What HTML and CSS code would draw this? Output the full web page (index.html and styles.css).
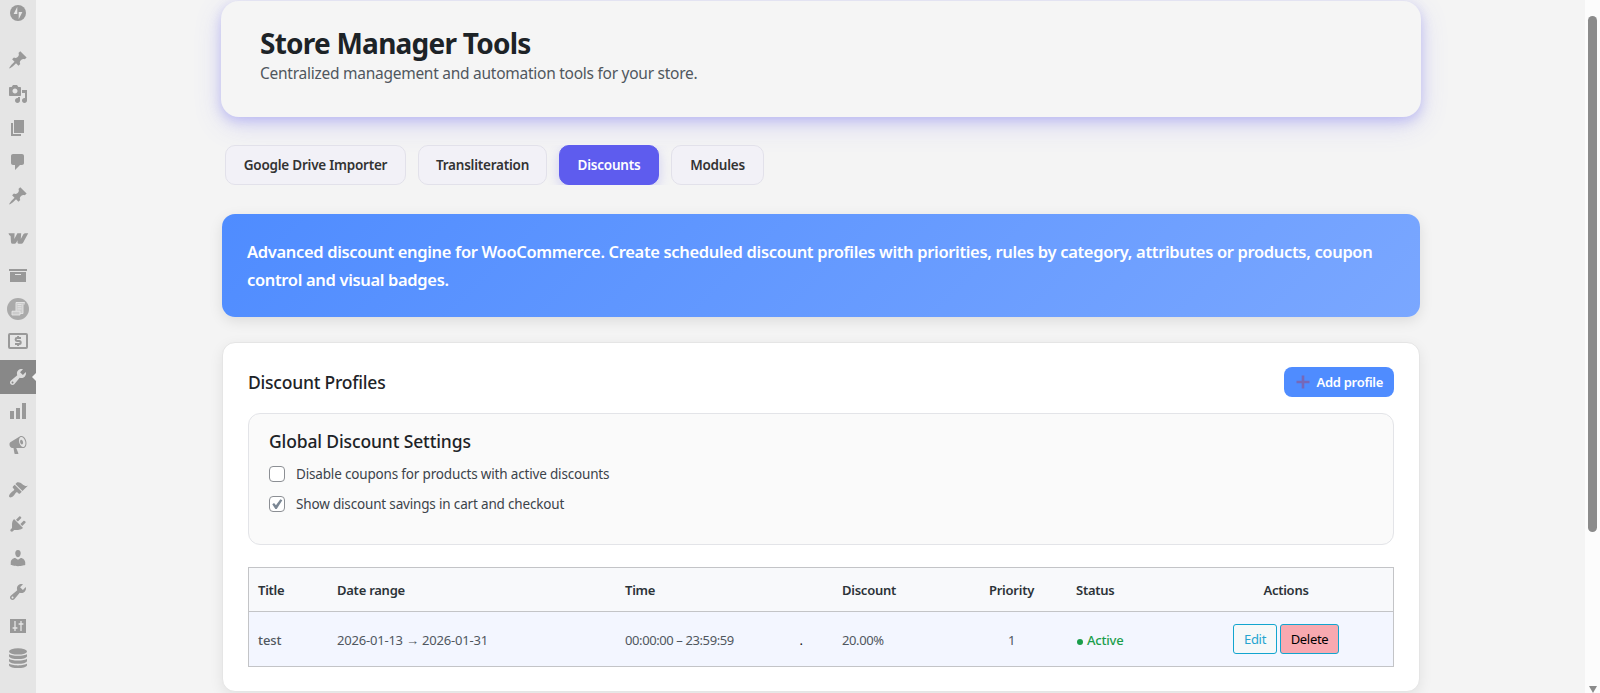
FILE: index.html
```html
<!DOCTYPE html>
<html lang="en">

<head>
    <meta charset="UTF-8">
    <meta name="viewport" content="width=device-width, initial-scale=1.0">
    <title>Store Manager Tools</title>
    <link rel="stylesheet" href="styles.css">
</head>

<body>
    <nav class="menu">
        <a class="menu-item first"><svg viewBox="0 0 20 20"><circle cx="10" cy="10" r="8"/><path class="cut" d="M9.3 3.8v7.1H5.6zM10.7 16.2V9.1h3.7z"/></svg></a>
        <a class="menu-item gap-l"><svg viewBox="0 0 20 20"><path d="M10.44 3.02l1.82-1.82 6.36 6.35-1.83 1.82c-1.05-.68-2.48-.57-3.41.36l-.75.75c-.92.93-1.04 2.35-.35 3.41l-1.83 1.82-2.41-2.41-2.8 2.79c-.42.42-3.38 2.71-3.8 2.29s1.86-3.39 2.28-3.81l2.79-2.79L4.1 9.36l1.83-1.82c1.05.69 2.48.57 3.4-.36l.75-.75c.93-.92 1.05-2.35.36-3.41z"/></svg></a>
        <a class="menu-item"><svg viewBox="0 0 20 20"><path d="M13 11V4c0-.55-.45-1-1-1h-1.67L9 1H5L3.67 3H2c-.55 0-1 .45-1 1v7c0 .55.45 1 1 1h10c.55 0 1-.45 1-1zM7 4.5c1.38 0 2.5 1.12 2.5 2.5S8.38 9.5 7 9.5 4.5 8.38 4.5 7 5.62 4.5 7 4.5zM14 6h5v10.5c0 1.38-1.12 2.5-2.5 2.5S14 17.88 14 16.5s1.12-2.5 2.5-2.5c.17 0 .34.02.5.05V9h-3V6zm-4 8.05V13h2v3.5c0 1.38-1.12 2.5-2.5 2.5S7 17.88 7 16.5 8.12 14 9.5 14c.17 0 .34.02.5.05z"/></svg></a>
        <a class="menu-item"><svg viewBox="0 0 20 20"><path d="M6 15V2h10v13H6zm-1 1h8v2H3V5h2v11z"/></svg></a>
        <a class="menu-item"><svg viewBox="0 0 20 20"><path d="M5 2h9c1.1 0 2 .9 2 2v7c0 1.1-.9 2-2 2h-2l-5 5v-5H5c-1.1 0-2-.9-2-2V4c0-1.1.9-2 2-2z"/></svg></a>
        <a class="menu-item"><svg viewBox="0 0 20 20"><path d="M10.44 3.02l1.82-1.82 6.36 6.35-1.83 1.82c-1.05-.68-2.48-.57-3.41.36l-.75.75c-.92.93-1.04 2.35-.35 3.41l-1.83 1.82-2.41-2.41-2.8 2.79c-.42.42-3.38 2.71-3.8 2.29s1.86-3.39 2.28-3.81l2.79-2.79L4.1 9.36l1.83-1.82c1.05.69 2.48.57 3.4-.36l.75-.75c.93-.92 1.05-2.35.36-3.41z"/></svg></a>
        <a class="menu-item gap-m"><svg viewBox="0 0 20 20"><path d="M.5 5.2H6.6L6.3 11 9.4 5.2H13.2L12.8 11 15.4 6.2Q16 5.2 17.4 5.2H20.2L15.2 14.6Q14.6 15.8 13.2 15.8H11Q9.6 15.8 9.5 14.4V12.2L8.3 14.6Q7.6 15.8 6.4 15.8H4.6Q3.2 15.8 3 14.2L2.6 8Q1 8 .5 5.2z"/></svg></a>
        <a class="menu-item gap-s"><svg viewBox="0 0 20 20"><path d="M19 4v2H1V4h18zM2 7h16v10H2V7zm11 3V9H7v1h6z"/></svg></a>
        <a class="menu-item"><svg viewBox="0 0 20 20"><circle class="disc" cx="10" cy="10" r="11"/><path class="paper" d="M8 3h9v2.4h-2V14H8zM4 12h8v4H4z"/><path class="paper-line" d="M9.5 5.5h4M9.5 7.7h4M9.5 9.9h4M4 12.2h8v3.8H4zM8 12V3.5h8.5M15 5v9.5h-3"/></svg></a>
        <a class="menu-item"><svg viewBox="0 0 20 20"><rect class="frame" x="1" y="1" width="18" height="14" rx="1"/><path class="dollar" d="M13 5H9Q7.6 5 7.6 6.4T9 7.9h2.2q1.5 0 1.5 1.5t-1.5 1.5H7M10.1 3v2M10.1 11v2"/></svg></a>
        <a class="menu-item current"><svg viewBox="0 0 20 20"><path d="M16.68 9.77c-1.34 1.34-3.3 1.67-4.95.99l-5.41 6.52c-.99.99-2.59.99-3.58 0s-.99-2.59 0-3.57l6.52-5.42c-.68-1.65-.35-3.61.99-4.95 1.28-1.28 3.12-1.62 4.72-1.06l-2.89 2.89 2.82 2.82 2.86-2.87c.53 1.58.18 3.39-1.08 4.65zM3.81 16.21c.4.39 1.04.39 1.43 0 .4-.4.4-1.04 0-1.43-.39-.4-1.03-.4-1.43 0-.39.39-.39 1.03 0 1.43z"/></svg></a>
        <a class="menu-item"><svg viewBox="0 0 20 20"><path d="M18 18V2h-4v16h4zm-6 0V7H8v11h4zm-6 0v-8H2v8h4z"/></svg></a>
        <a class="menu-item"><svg viewBox="0 0 20 20"><path d="M18.15 5.94c.46 1.62.38 3.22-.02 4.48-.42 1.28-1.26 2.18-2.3 2.48-.16.06-.26.06-.4.06-.06.02-.12.02-.18.02-.06.02-.14.02-.22.02h-6.8l2.22 5.5c.02.14-.06.26-.14.34-.08.1-.24.16-.34.16H6.95c-.1 0-.26-.06-.34-.16-.08-.08-.16-.2-.14-.34l-1-5.5H4.25l-.02-.02c-.5.06-1.08-.18-1.54-.62s-.88-1.08-1.06-1.88c-.24-.8-.2-1.56-.02-2.2.18-.62.58-1.08 1.06-1.3l.02-.02 9-5.4c.1-.06.18-.1.24-.16.06-.04.14-.08.24-.12.16-.08.28-.12.5-.18 1.04-.3 2.24.1 3.22.98s1.84 2.24 2.26 3.86zm-2.58 5.98h-.02c.4-.1.74-.34 1.04-.7.58-.7.86-1.76.86-3.04 0-.64-.1-1.3-.28-1.98-.34-1.36-1.02-2.5-1.78-3.24s-1.68-1.1-2.46-.88c-.82.22-1.4.96-1.7 2-.32 1.04-.28 2.36.06 3.72.38 1.36 1 2.5 1.8 3.24.78.74 1.62 1.1 2.48.88zm-2.54-7.08c.22-.04.42-.02.62.04.38.16.76.48 1.02 1s.42 1.2.42 1.78c0 .3-.04.56-.12.8-.18.48-.44.84-.86.94-.34.1-.8-.06-1.14-.4s-.64-.86-.78-1.5c-.18-.62-.12-1.24.02-1.72s.48-.84.82-.94z"/></svg></a>
        <a class="menu-item gap-tools"><svg viewBox="0 0 20 20"><path d="M14.48 11.06L7.41 3.99l1.5-1.5c.5-.56 2.3-.47 3.51.32 1.21.8 1.43 1.28 2.91 2.1 1.18.64 2.45 1.26 4.45.85zm-.71.71L6.7 4.7 4.93 6.47c-.39.39-.39 1.02 0 1.41l1.06 1.06c.39.39.39 1.03 0 1.42-.6.6-1.43 1.11-2.21 1.69-.35.26-.7.53-1.01.84C1.43 14.23.4 16.08 1.4 17.07c.99 1 2.84-.03 4.18-1.36.31-.31.58-.66.85-1.02.57-.78 1.08-1.61 1.69-2.21.39-.39 1.02-.39 1.41 0l1.06 1.06c.39.39 1.02.39 1.41 0z"/></svg></a>
        <a class="menu-item"><svg viewBox="0 0 20 20"><path d="M13.11 4.36L9.87 7.6 8 5.73l3.24-3.24c.35-.34 1.05-.2 1.56.32.52.51.66 1.21.31 1.55zm-8 1.77l.91-1.12 9.01 9.01-1.19.84c-.71.71-2.63 1.16-3.82 1.16H6.14L4.9 17.26c-.59.59-1.54.59-2.12 0-.59-.58-.59-1.53 0-2.12l1.24-1.24v-3.88c0-1.13.4-3.19 1.09-3.89zm7.26 3.97l3.24-3.24c.34-.35 1.04-.21 1.55.31.52.51.66 1.21.31 1.55l-3.24 3.25z"/></svg></a>
        <a class="menu-item"><svg viewBox="0 0 20 20"><path d="M10 9.25c-2.27 0-2.73-3.44-2.73-3.44C7 4.02 7.82 2 9.97 2c2.16 0 2.98 2.02 2.71 3.81 0 0-.41 3.44-2.68 3.44zm0 2.57L12.72 10c2.39 0 4.52 2.33 4.52 4.53v2.49s-3.65 1.13-7.24 1.13c-3.65 0-7.24-1.13-7.24-1.13v-2.49c0-2.25 1.94-4.48 4.47-4.48z"/></svg></a>
        <a class="menu-item"><svg viewBox="0 0 20 20"><path d="M16.68 9.77c-1.34 1.34-3.3 1.67-4.95.99l-5.41 6.52c-.99.99-2.59.99-3.58 0s-.99-2.59 0-3.57l6.52-5.42c-.68-1.65-.35-3.61.99-4.95 1.28-1.28 3.12-1.62 4.72-1.06l-2.89 2.89 2.82 2.82 2.86-2.87c.53 1.58.18 3.39-1.08 4.65zM3.81 16.21c.4.39 1.04.39 1.43 0 .4-.4.4-1.04 0-1.43-.39-.4-1.03-.4-1.43 0-.39.39-.39 1.03 0 1.43z"/></svg></a>
        <a class="menu-item"><svg viewBox="0 0 20 20"><path d="M2 3h16v14H2z"/><path class="sliders" d="M7 5v10M4.6 12h4.8M13 5v10M10.6 8h4.8"/></svg></a>
        <a class="menu-item"><svg viewBox="0 0 20 20"><ellipse cx="10" cy="1.4" rx="9" ry="3.2"/><path d="M1 4c2 2.4 16 2.4 18 0v2.2c-1 3.8-17 3.8-18 0zM1 8.8c2 2.4 16 2.4 18 0V11c-1 3.8-17 3.8-18 0zM1 13.6c2 2.4 16 2.4 18 0v1.6c-1 3.8-17 3.8-18 0z"/></svg></a>
    </nav>

    <main class="content">
        <header class="hero">
            <h1>Store Manager Tools</h1>
            <p>Centralized management and automation tools for your store.</p>
        </header>

        <div class="tabs">
            <a class="tab tab-importer">Google Drive Importer</a>
            <a class="tab tab-translit">Transliteration</a>
            <a class="tab tab-discounts active">Discounts</a>
            <a class="tab tab-modules">Modules</a>
        </div>

        <div class="banner"><span>Advanced discount engine for WooCommerce. Create scheduled discount profiles with priorities, rules by category, attributes or products, coupon</span> control and visual badges.</div>

        <section class="card">
            <div class="card-head">
                <h2>Discount Profiles</h2>
                <button class="add-btn">
                    <svg viewBox="0 0 14 14" width="14" height="14"><path d="M7 .5v13M.5 7h13"/></svg>
                    <span>Add profile</span>
                </button>
            </div>

            <div class="settings">
                <h3>Global Discount Settings</h3>
                <label class="option"><span class="box"></span><span class="option-text">Disable coupons for products with active discounts</span></label>
                <label class="option"><span class="box"><svg viewBox="0 0 16 16"><path d="M2.6 8.4l2-1.5 2.2 2.4 5-6.6 2.3 1-6.4 10h-1.6z"/></svg></span><span class="option-text">Show discount savings in cart and checkout</span></label>
            </div>

            <table class="profiles">
                <colgroup>
                    <col class="c-title"><col class="c-date"><col class="c-time"><col class="c-badge">
                    <col class="c-discount"><col class="c-priority"><col class="c-status"><col class="c-actions">
                </colgroup>
                <thead>
                    <tr>
                        <th>Title</th>
                        <th>Date range</th>
                        <th>Time</th>
                        <th></th>
                        <th>Discount</th>
                        <th class="center">Priority</th>
                        <th>Status</th>
                        <th class="center">Actions</th>
                    </tr>
                </thead>
                <tbody>
                    <tr>
                        <td class="name">test</td>
                        <td class="date">2026-01-13 → 2026-01-31</td>
                        <td class="time">00:00:00 – 23:59:59</td>
                        <td class="center dot">.</td>
                        <td class="value">20.00%</td>
                        <td class="center">1</td>
                        <td class="status"><i></i>Active</td>
                        <td class="buttons">
                            <div class="actions">
                                <button class="btn">Edit</button>
                                <button class="btn delete">Delete</button>
                            </div>
                        </td>
                    </tr>
                </tbody>
            </table>
        </section>
    </main>

    <div class="scrollbar">
        <div class="thumb"></div>
        <div class="arrow"></div>
    </div>
</body>

</html>
```
FILE: styles.css
```css
* {
    margin: 0;
    padding: 0;
    box-sizing: border-box;
}

body {
    display: flex;
    height: 693px;
    overflow: hidden;
    background: #f4f4f4;
    color: #1d2327;
    font-family: "Segoe UI", "Noto Sans", "Open Sans", sans-serif;
    font-size: 13.5px;
}

/* admin menu */
.menu {
    flex: none;
    width: 36px;
    height: 693px;
    background: #e5e5e5;
    overflow: hidden;
}

.menu-item {
    position: relative;
    display: flex;
    align-items: center;
    justify-content: center;
    height: 34px;
    padding-right: 1px;
}

.menu-item svg {
    width: 20px;
    height: 20px;
    fill: #999;
    overflow: visible;
}

.first {
    margin-top: -4px;
}

.gap-l {
    margin-top: 13px;
}

.gap-tools {
    margin-top: 11px;
}

.gap-m {
    margin-top: 8px;
}

.gap-s {
    margin-top: 3px;
}

.menu .cut {
    fill: #e5e5e5;
}

.menu .disc {
    fill: #aaa;
}

.menu .paper {
    fill: #ccc;
}

.menu .paper-line {
    fill: none;
    stroke: #e5e5e5;
    stroke-width: .9;
}

.menu .frame {
    fill: none;
    stroke: #999;
    stroke-width: 2;
}

.menu .dollar {
    fill: none;
    stroke: #999;
    stroke-width: 2;
}

.menu .sliders {
    stroke: #e5e5e5;
    stroke-width: 1.3;
}

.menu .current {
    background: #888;
}

.menu .current svg {
    fill: #ddd;
}

.current::after {
    content: "";
    position: absolute;
    right: 0;
    top: 13px;
    border: 4px solid transparent;
    border-left: none;
    border-right-color: #f4f4f4;
}

/* page */
.content {
    width: 1200px;
    margin-left: 185px;
    padding-top: 1px;
}

.hero {
    height: 116px;
    padding: 22px 39px;
    border-radius: 18px;
    background: #f5f5f5;
    box-shadow: 0 4px 12px rgba(93, 87, 240, .27), 0 8px 28px rgba(93, 87, 240, .18);
}

.hero h1 {
    font-size: 28px;
    font-weight: 700;
    line-height: 40px;
    letter-spacing: -.76px;
}

.hero p {
    color: #50575e;
    font-size: 15.5px;
    line-height: 21px;
    letter-spacing: -.26px;
}

.tabs {
    display: flex;
    gap: 12px;
    padding: 0 4px;
    margin: 28px 0 29px;
    overflow: hidden;
}

.tab {
    display: flex;
    align-items: center;
    justify-content: center;
    height: 40px;
    border: 1px solid #e2e1ea;
    border-radius: 10px;
    background: #f2f1f7;
    color: #333;
    font-weight: 600;
    letter-spacing: -.23px;
}

.tab-importer {
    width: 181px;
}

.tab-translit {
    width: 129px;
}

.tab-discounts {
    width: 100px;
}

.tab-modules {
    width: 93px;
}

.tab.active {
    border-color: #5e5cee;
    background: #5e5cee;
    color: #fff;
    box-shadow: 0 4px 12px rgba(94, 92, 238, .25);
}

.banner {
    height: 103px;
    margin: 0 1px 25px;
    padding: 24px 25px;
    border-radius: 13px;
    background: linear-gradient(135deg, #4f8cff, #7aa7ff);
    box-shadow: 0 4px 14px rgba(0, 0, 0, .1);
    color: #fff;
    font-size: 16.5px;
    font-weight: 600;
    line-height: 28px;
    letter-spacing: -.335px;
}

.banner span {
    display: block;
    white-space: nowrap;
}

.card {
    height: 350px;
    margin: 0 1px;
    padding: 24px 25px;
    border: 1px solid #e5e5e5;
    border-radius: 13px;
    background: #fff;
    box-shadow: 0 4px 14px rgba(0, 0, 0, .08);
}

.card-head {
    display: flex;
    justify-content: space-between;
    align-items: center;
    height: 30px;
    margin-bottom: 16px;
}

.card-head h2 {
    font-size: 17.5px;
    font-weight: 500;
    letter-spacing: -.22px;
}

.add-btn {
    display: flex;
    align-items: center;
    justify-content: space-between;
    width: 110px;
    height: 30px;
    padding: 0 11px 0 12px;
    border: none;
    border-radius: 8px;
    background: #4f8cff;
    color: #fff;
    font: inherit;
    font-size: 13px;
    font-weight: 600;
    letter-spacing: -.3px;
}

.add-btn svg {
    stroke: #7668b8;
    stroke-width: 2.6;
}

.settings {
    height: 132px;
    margin-bottom: 22px;
    padding: 15px 20px;
    border: 1px solid #e3e4e8;
    border-radius: 12px;
    background: #fafafa;
}

.settings h3 {
    margin-bottom: 6px;
    font-size: 17.5px;
    font-weight: 500;
    line-height: 24px;
    letter-spacing: -.13px;
}

.option {
    display: flex;
    align-items: center;
    height: 30px;
    color: #3c434a;
}

.option-text {
    letter-spacing: -.17px;
}

.box {
    width: 16px;
    height: 16px;
    margin-right: 11px;
    border: 1px solid #8c8f94;
    border-radius: 4px;
    background: #fff;
}

.box svg {
    display: block;
    width: 14px;
    height: 14px;
    fill: #7b8794;
    overflow: visible;
}

.profiles {
    width: 1146px;
    height: 100px;
    table-layout: fixed;
    border: 1px solid #c3c4c7;
    border-spacing: 0;
}

.c-title { width: 79px; }
.c-date { width: 288px; }
.c-time { width: 155px; }
.c-badge { width: 62px; }
.c-discount { width: 125px; }
.c-priority { width: 107px; }
.c-status { width: 114px; }

.profiles th {
    height: 44px;
    padding: 0 9px;
    border-bottom: 1px solid #c3c4c7;
    background: #f8f9fb;
    color: #2c3338;
    font-size: 13px;
    font-weight: 600;
    text-align: left;
    letter-spacing: -.25px;
}

.profiles td {
    height: 54px;
    padding: 2px 9px 0;
    background: #f3f6ff;
    color: #50575e;
    font-size: 13px;
    letter-spacing: -.4px;
}

.profiles th:nth-child(7),
.profiles .status {
    padding-left: 11px;
}

.profiles .center {
    text-align: center;
}

.profiles .dot {
    padding-right: 11px;
    color: #111;
}

.profiles .date {
    letter-spacing: -.2px;
}

.profiles .name {
    font-weight: 500;
    letter-spacing: -.1px;
}

.profiles .status {
    color: #1a9e4b;
    font-weight: 500;
    letter-spacing: -.2px;
}

.profiles .buttons {
    padding-top: 0;
}

.status i {
    display: inline-block;
    width: 6px;
    height: 6px;
    margin: 0 4px 0 1px;
    border-radius: 50%;
    background: #1a9e4b;
}

.actions {
    display: flex;
    justify-content: center;
    gap: 3px;
}

.btn {
    width: 44px;
    height: 30px;
    border: 1px solid #12a5cf;
    border-radius: 3px;
    background: #f6f8f8;
    color: #25a5d0;
    font: inherit;
    letter-spacing: -.3px;
}

.delete {
    width: 59px;
    background: #f8a9b0;
    color: #000;
}

/* scrollbar */
.scrollbar {
    display: flex;
    flex-direction: column;
    align-items: center;
    justify-content: space-between;
    width: 15px;
    height: 693px;
    margin-left: auto;
    padding: 16px 0 0;
    background: #fcfcfc;
}

.thumb {
    width: 9px;
    height: 516px;
    border-radius: 5px;
    background: #8b8b8b;
}

.arrow {
    border: 4.5px solid transparent;
    border-top: 7px solid #8b8b8b;
    border-bottom: none;
}
```
